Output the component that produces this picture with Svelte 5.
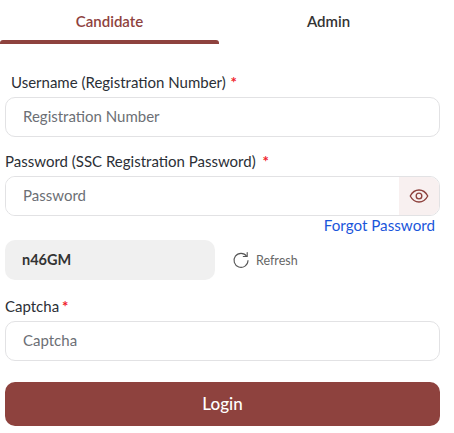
<script>
  let username = '';
  let password = '';
  let captcha = '';
  let activeTab = 'Candidate';
  const tabs = ['Candidate', 'Admin'];
</script>

<div class="login">
  <div class="tabs">
    {#each tabs as tab}
      <button class={tab === activeTab ? 'tab active' : 'tab'} on:click={() => (activeTab = tab)}>{tab}</button>
    {/each}
  </div>

  <form class="form" on:submit|preventDefault>
    <label class="label first" for="username">Username (Registration Number) <span class="req">*</span></label>
    <input id="username" class="input" placeholder="Registration Number" bind:value={username} />

    <label class="label second" for="password">Password (SSC Registration Password) <span class="req">*</span></label>
    <div class="password">
      <input id="password" type="password" placeholder="Password" bind:value={password} />
      <button type="button" class="eye" aria-label="Show password">
        <svg width="20" height="20" viewBox="0 0 24 24" fill="none" stroke="#8e423e" stroke-width="1.6" stroke-linecap="round" stroke-linejoin="round">
          <path d="M1.5 12C4 7.2 7.6 4.8 12 4.8s8 2.4 10.5 7.2c-2.5 4.8-6.100 7.200-10.500 7.200S4 16.800 1.500 12z" />
          <circle cx="12" cy="12" r="3.400" />
        </svg>
      </button>
    </div>
    <div class="forgot"><a href="#forgot">Forgot Password</a></div>

    <div class="captcha_row">
      <div class="captcha_code">n46GM</div>
      <button type="button" class="refresh">
        <svg width="18" height="18" viewBox="0 0 18 18" fill="none" stroke="#555" stroke-width="1.100" stroke-linecap="round" stroke-linejoin="round">
          <path d="M14.700 5.300A7 7 0 1 0 16 9.500" />
          <path d="M15.200 1.600v3.900h-3.900" />
        </svg>
        <span>Refresh</span>
      </button>
    </div>

    <label class="label third" for="captcha">Captcha <span class="req">*</span></label>
    <input id="captcha" class="input" placeholder="Captcha" bind:value={captcha} />

    <button type="submit" class="submit">Login</button>
  </form>
</div>

<style>
  :global(body) {
    background: #fff;
  }

  .login {
    width: 454px;
    font-family: Lato, "Open Sans", sans-serif;
    color: #333;
  }

  .tabs {
    display: grid;
    grid-template-columns: 219px 219px;
    height: 44px;
  }

  .tab {
    position: relative;
    border: none;
    background: none;
    padding: 0 0 3px;
    height: 44px;
    font: inherit;
    font-size: 15px;
    font-weight: 600;
    color: #333;
  }

  .active {
    color: #8e423e;
  }

  .active::after {
    content: '';
    position: absolute;
    left: 0;
    right: 0;
    bottom: 0;
    height: 4px;
    background: #8e423e;
    border-radius: 3px 3px 0 0;
  }

  .form {
    display: flex;
    flex-direction: column;
    padding: 0 14px 0 5px;
  }

  .label {
    font-size: 15px;
    line-height: 20px;
    color: #2b2f36;
    margin-bottom: 5px;
  }

  .first {
    margin-top: 28px;
    margin-left: 6px;
  }

  .second {
    margin-top: 14px;
  }

  .third {
    margin-top: 16px;
  }

  .req {
    color: #f01c2c;
    font-weight: 700;
    margin-left: 1px;
  }

  .second .req {
    margin-left: 3px;
  }

  .third .req {
    margin-left: -1px;
  }

  .input,
  .password {
    box-sizing: border-box;
    width: 435px;
    height: 40px;
    border: 1px solid #e2e2e4;
    border-radius: 10px;
    background: #fff;
  }

  .input {
    padding: 0 17px 2px;
    font: inherit;
    font-size: 15px;
  }

  .password {
    display: flex;
    overflow: hidden;
  }

  .password input {
    flex: 1;
    min-width: 0;
    border: none;
    outline: none;
    padding: 0 17px 2px;
    font: inherit;
    font-size: 15px;
  }

  input::placeholder {
    color: #6c6f75;
    opacity: 1;
  }

  .eye {
    width: 40px;
    border: none;
    padding: 0;
    background: #f8f0f0;
    display: flex;
    align-items: center;
    justify-content: center;
  }

  .forgot {
    text-align: right;
    font-size: 15.200px;
    line-height: 18px;
    padding-right: 5px;
  }

  .forgot a {
    color: #1a56db;
    text-decoration: none;
  }

  .captcha_row {
    display: flex;
    align-items: center;
    gap: 17px;
    margin-top: 6px;
  }

  .captcha_code {
    width: 210px;
    height: 40px;
    box-sizing: border-box;
    padding: 0 0 2px 17px;
    display: flex;
    align-items: center;
    background: #f0f0f0;
    border-radius: 10px;
    font-size: 14.500px;
    font-weight: 700;
    color: #333;
  }

  .refresh {
    display: flex;
    align-items: center;
    gap: 6px;
    border: none;
    background: none;
    padding: 0;
    font: inherit;
    font-size: 12.500px;
    color: #666;
  }

  .submit {
    height: 44px;
    width: 435px;
    margin-top: 21px;
    padding-bottom: 2px;
    border: none;
    border-radius: 10px;
    background: #8e423e;
    color: #fff;
    font: inherit;
    font-size: 17px;
    font-weight: 500;
  }
</style>
